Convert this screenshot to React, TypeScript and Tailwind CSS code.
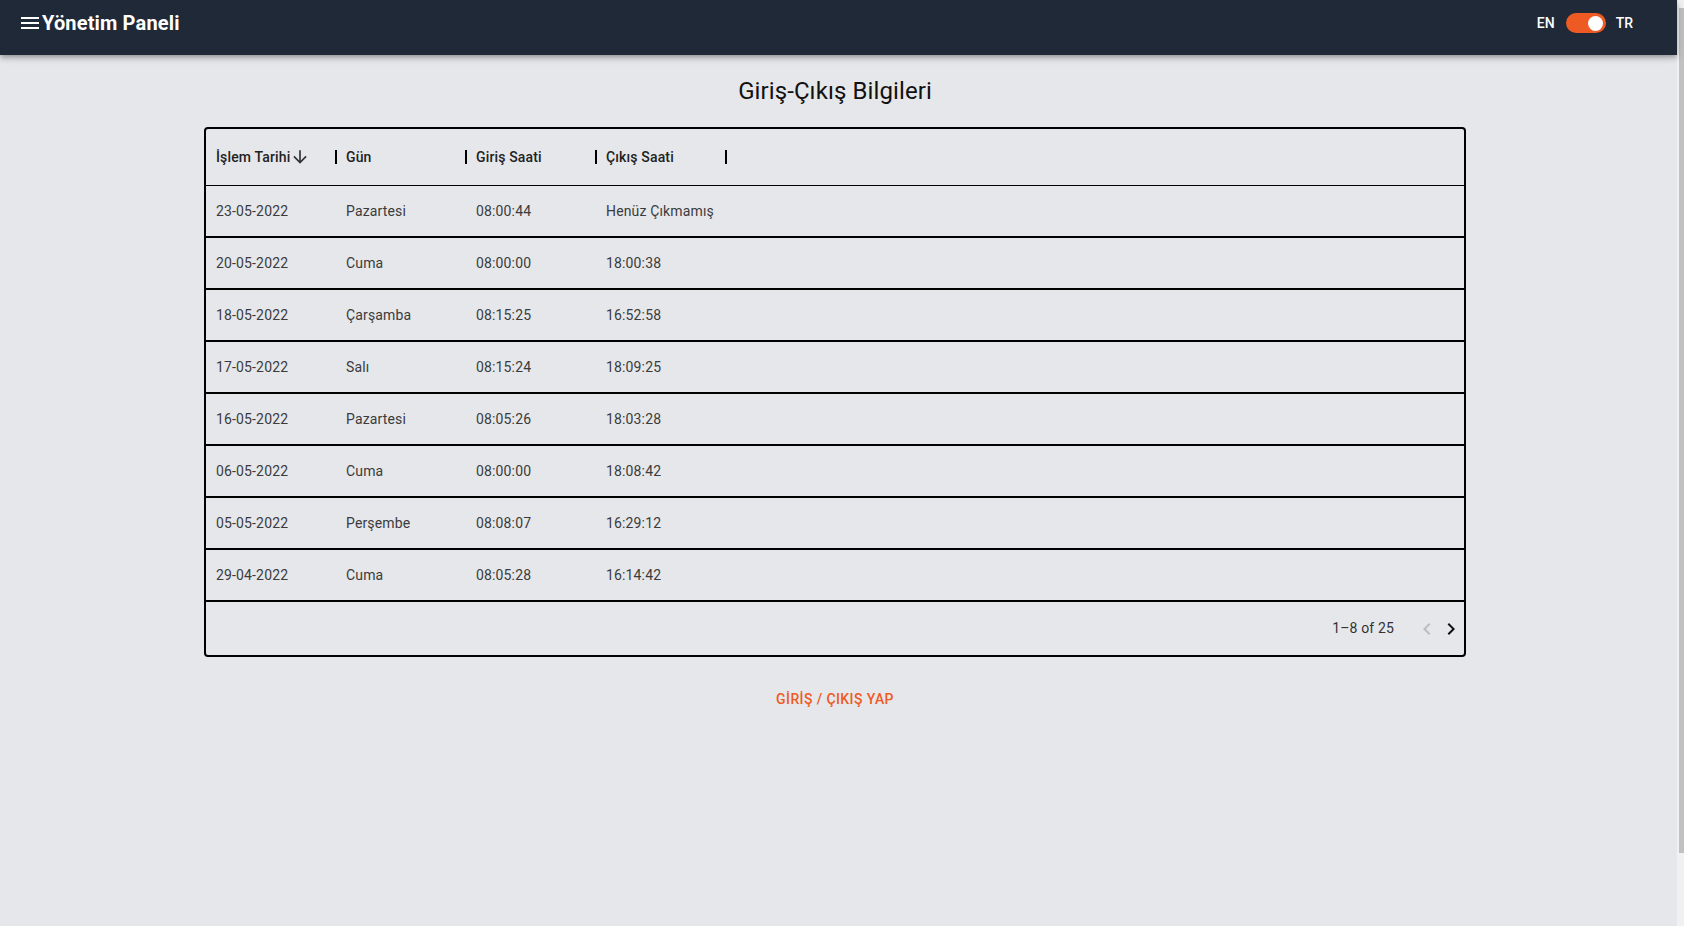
import React from 'react';

const rows = [
  { date: '23-05-2022', day: 'Pazartesi', giris: '08:00:44', cikis: 'Henüz Çıkmamış' },
  { date: '20-05-2022', day: 'Cuma', giris: '08:00:00', cikis: '18:00:38' },
  { date: '18-05-2022', day: 'Çarşamba', giris: '08:15:25', cikis: '16:52:58' },
  { date: '17-05-2022', day: 'Salı', giris: '08:15:24', cikis: '18:09:25' },
  { date: '16-05-2022', day: 'Pazartesi', giris: '08:05:26', cikis: '18:03:28' },
  { date: '06-05-2022', day: 'Cuma', giris: '08:00:00', cikis: '18:08:42' },
  { date: '05-05-2022', day: 'Perşembe', giris: '08:08:07', cikis: '16:29:12' },
  { date: '29-04-2022', day: 'Cuma', giris: '08:05:28', cikis: '16:14:42' },
];

const columns = ['İşlem Tarihi', 'Gün', 'Giriş Saati', 'Çıkış Saati'];

const MenuIcon = () => (
  <svg width="24" height="24" viewBox="0 0 24 24" fill="currentColor">
    <path d="M3 18h18v-2H3v2zm0-5h18v-2H3v2zm0-7v2h18V6H3z" />
  </svg>
);

const ArrowDown = () => (
  <svg width="20" height="20" viewBox="0 0 24 24" fill="currentColor">
    <path d="M20 12l-1.41-1.41L13 16.17V4h-2v12.17l-5.58-5.59L4 12l8 8 8-8z" />
  </svg>
);

const ChevronLeft = () => (
  <svg width="24" height="24" viewBox="0 0 24 24" fill="currentColor">
    <path d="M15.41 16.59L10.83 12l4.58-4.59L14 6l-6 6 6 6 1.41-1.41z" />
  </svg>
);

const ChevronRight = () => (
  <svg width="24" height="24" viewBox="0 0 24 24" fill="currentColor">
    <path d="M8.59 16.59L13.17 12 8.59 7.41 10 6l6 6-6 6-1.41-1.41z" />
  </svg>
);

const Separator = () => <span className="-mr-[1px] ml-auto h-[14px] w-[2px] shrink-0 bg-black" />;

const App: React.FC = () => {
  return (
    <div
      className="flex h-[926px] w-[1684px] overflow-hidden bg-[#e6e7eb]"
      style={{ fontFamily: 'Roboto, "Liberation Sans", Arial, sans-serif' }}
    >
      <div className="flex min-w-0 flex-1 flex-col">
        <header className="relative z-10 h-[55px] bg-[#1f2937] text-white shadow-[0_2px_4px_-1px_rgba(0,0,0,0.2),0_4px_5px_0_rgba(0,0,0,0.14),0_1px_10px_0_rgba(0,0,0,0.12)]">
          <div className="flex h-[46px] items-center pl-[18px] pr-[44px]">
            <MenuIcon />
            <h1 className="text-[20px] font-bold leading-[32px] tracking-[0.15px]">Yönetim Paneli</h1>
            <div className="ml-auto flex items-center text-[14px] font-medium">
              <span>EN</span>
              <span className="ml-[11px] flex h-[20px] w-[40px] items-center justify-end rounded-full bg-[#ee5a24] pr-[3px]">
                <span className="h-[15px] w-[15px] rounded-full bg-white" />
              </span>
              <span className="ml-[10px]">TR</span>
            </div>
          </div>
        </header>

        <main className="flex flex-col items-center pr-[7px]">
          <h2 className="mt-[20px] text-[24px] leading-[32px] tracking-[0.1px] text-[#111]">Giriş-Çıkış Bilgileri</h2>

          <div className="mt-[20px] w-[1262px] rounded-[4px] border-2 border-black text-[14px] tracking-[0.15px]">
            <div className="flex h-[57px] items-center border-b border-black font-medium text-[#222]">
              {columns.map((c, i) => (
                <div key={c} className="flex w-[130px] items-center pl-[10px]">
                  <span>{c}</span>
                  {i === 0 && (
                    <span className="text-[#333]">
                      <ArrowDown />
                    </span>
                  )}
                  <Separator />
                </div>
              ))}
            </div>

            {rows.map((r) => (
              <div key={r.date} className="flex h-[52px] items-center border-b-2 border-black text-[#3b3b3b]">
                <div className="w-[130px] px-[10px]">{r.date}</div>
                <div className="w-[130px] px-[10px]">{r.day}</div>
                <div className="w-[130px] px-[10px]">{r.giris}</div>
                <div className="w-[130px] whitespace-nowrap px-[10px]">{r.cikis}</div>
              </div>
            ))}

            <div className="flex h-[53px] items-center justify-end pr-[1px] text-[#333]">
              <span>1–8 of 25</span>
              <div className="ml-[21px] flex items-center">
                <span className="text-[#bdbdbd]">
                  <ChevronLeft />
                </span>
                <span className="text-[#111]">
                  <ChevronRight />
                </span>
              </div>
            </div>
          </div>

          <button className="mt-[24px] rounded px-[8px] py-[6px] text-[14px] font-medium uppercase leading-[24px] tracking-[0.4px] text-[#ee5a24]">
            GİRİŞ / ÇIKIŞ YAP
          </button>
        </main>
      </div>

      <div className="flex w-[7px] flex-col bg-[#f1f1f1] pt-[8px]">
        <div className="ml-auto h-[845px] w-[5px] bg-[#c1c1c1]" />
      </div>
    </div>
  );
};

export default App;
